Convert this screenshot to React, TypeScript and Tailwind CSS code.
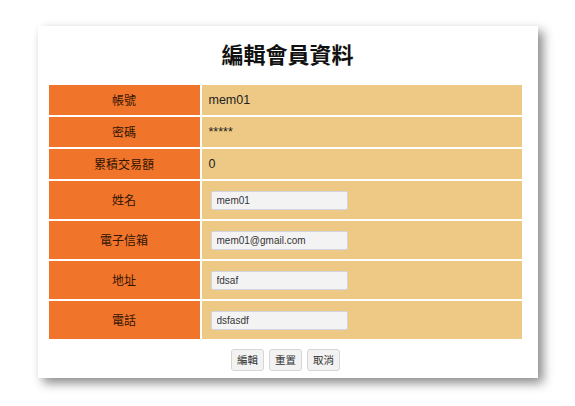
import React from 'react';

const font = { fontFamily: '"Liberation Sans", "Noto Sans CJK TC", sans-serif' };

const rows: { label: string; value: string; input?: boolean }[] = [
  { label: '帳號', value: 'mem01' },
  { label: '密碼', value: '*****' },
  { label: '累積交易額', value: '0' },
  { label: '姓名', value: 'mem01', input: true },
  { label: '電子信箱', value: 'mem01@gmail.com', input: true },
  { label: '地址', value: 'fdsaf', input: true },
  { label: '電話', value: 'dsfasdf', input: true },
];

const App = () => {
  return (
    <div className="min-h-screen bg-white pt-[26px]" style={font}>
      <div className="mx-auto w-[500px] bg-white pt-[12px] pb-[7px] shadow-[5px_5px_10px_#8a8a8a]">
        <h1 className="text-center text-[22px] leading-[30px] font-semibold text-[#111] font-['Noto_Sans_CJK_TC',sans-serif]">
          編輯會員資料
        </h1>

        <table className="ml-[9px] mt-[15px] w-[477px] border-separate border-spacing-[2px]">
          <tbody>
            {rows.map((row) => (
              <tr key={row.label} className={row.input ? 'h-[38px]' : 'h-[30px]'}>
                <td className="w-[151px] bg-[#f0742a] text-center text-[12px] text-[#331504] font-['Noto_Sans_CJK_TC',sans-serif]">
                  {row.label}
                </td>
                <td className="bg-[#eec985] pl-[7px] text-[12.5px] text-[#222]">
                  {row.input ? (
                    <input
                      defaultValue={row.value}
                      className="ml-[2px] h-[19px] w-[137px] rounded-[2px] border border-[#cfd6de] bg-[#f3f3f3] px-[5px] text-[10px] text-[#333] outline-none"
                      style={font}
                    />
                  ) : (
                    row.value
                  )}
                </td>
              </tr>
            ))}
          </tbody>
        </table>

        <div className="mt-[8px] flex justify-center gap-[5px] pr-[4px]">
          {['編輯', '重置', '取消'].map((b) => (
            <button
              key={b}
              className="h-[22px] rounded-[3px] border border-[#d6d6d6] bg-[#f2f2f2] px-[5px] text-[10.5px] text-[#333] font-['Noto_Sans_CJK_TC',sans-serif]"
            >
              {b}
            </button>
          ))}
        </div>
      </div>
    </div>
  );
};

export default App;
